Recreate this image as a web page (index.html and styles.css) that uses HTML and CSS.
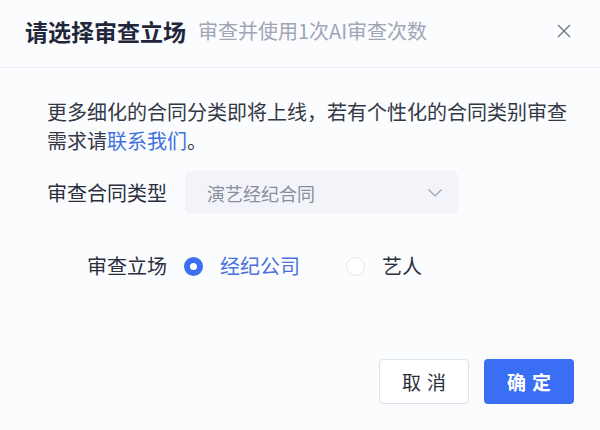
FILE: index.html
```html
<!DOCTYPE html>
<html lang="zh-CN">
<head>
<meta charset="utf-8">
<link rel="stylesheet" href="styles.css">
</head>
<body>
<div class="dialog">
  <div class="header">
    <span class="title">请选择审查立场</span>
    <span class="subtitle">审查并使用1次AI审查次数</span>
    <svg class="close" width="14" height="14" viewBox="0 0 14 14"><path d="M1 1L13 13M13 1L1 13" stroke="#6f7282" stroke-width="1.3" fill="none"/></svg>
  </div>
  <div class="content">
    <div class="notice">
      <div class="line">更多细化的合同分类即将上线，若有个性化的合同类别审查</div>
      <div class="line"><span>需求请</span><span class="link">联系我们</span><span>。</span></div>
    </div>
    <div class="form">
      <div class="label">审查合同类型</div>
      <div class="select">
        <span class="select-text">演艺经纪合同</span>
        <svg class="chevron" width="14" height="8" viewBox="0 0 14 8"><path d="M0.5 0.5L7 7L13.5 0.5" stroke="#9a9dab" stroke-width="1.1" fill="none"/></svg>
      </div>
      <div class="label">审查立场</div>
      <div class="radios">
        <div class="radio checked"><span class="dot"></span><span class="radio-text">经纪公司</span></div>
        <div class="radio"><span class="dot"></span><span class="radio-text">艺人</span></div>
      </div>
    </div>
  </div>
  <div class="footer">
    <div class="btn btn-cancel">取消</div>
    <div class="btn btn-ok">确定</div>
  </div>
</div>
</body>
</html>
```
FILE: styles.css
```css
* { box-sizing: border-box; }
html, body { margin: 0; padding: 0; }
body {
  background: #fbfcfe;
  font-family: "Noto Sans CJK SC", "Noto Sans", sans-serif;
}
.dialog {
  width: 600px;
  height: 430px;
  display: flex;
  flex-direction: column;
  background: #fbfcfe;
}
.header {
  height: 68px;
  border-bottom: 1px solid #eceef3;
  display: flex;
  align-items: center;
  padding: 0 29px 6px 25px;
}
.title {
  font-size: 23px;
  font-weight: 700;
  color: #22263a;
  line-height: 30px;
}
.subtitle {
  margin-left: 12px;
  font-size: 20px;
  color: #a2a5b5;
  line-height: 30px;
}
.close { margin-left: auto; }
.content {
  padding: 29px 30px 0 47px;
}
.notice {
  font-size: 20px;
  line-height: 29px;
  color: #343846;
}
.line { display: flex; white-space: nowrap; }
.link { color: #3f6fe0; }
.form {
  display: grid;
  grid-template-columns: 120px 273px;
  column-gap: 18px;
  row-gap: 37px;
  margin-top: 16px;
  align-items: center;
}
.label {
  text-align: right;
  font-size: 20px;
  line-height: 30px;
  color: #2b2f3d;
}
.select {
  height: 43px;
  background: #f2f4f9;
  border-radius: 6px;
  display: flex;
  align-items: center;
  padding: 0 16px 0 22px;
}
.select-text {
  font-size: 18px;
  color: #8b8e9d;
}
.chevron { margin-left: auto; }
.radios {
  display: flex;
  align-items: center;
  height: 30px;
  gap: 46px;
  margin-left: -1px;
}
.radio {
  display: flex;
  align-items: center;
  gap: 17px;
}
.dot {
  width: 19px;
  height: 19px;
  border-radius: 50%;
  border: 1px solid #e4e6ed;
  background: #fff;
}
.radio.checked .dot {
  border: 6px solid #3b6ff0;
  background: #fff;
}
.radio-text {
  font-size: 20px;
  line-height: 30px;
  color: #2b2f3d;
}
.radio.checked .radio-text { color: #4a72de; }
.footer {
  margin-top: auto;
  display: flex;
  justify-content: flex-end;
  gap: 15px;
  padding: 0 26px 26px 0;
}
.btn {
  width: 90px;
  height: 45px;
  border-radius: 4px;
  display: flex;
  align-items: center;
  justify-content: center;
  font-size: 19px;
  letter-spacing: 6px;
  text-indent: 6px;
}
.btn-cancel {
  background: #fff;
  border: 1px solid #dfe2ea;
  color: #2b2f3d;
}
.btn-ok {
  background: #3a6ff5;
  color: #fff;
  font-weight: 700;
}
```
